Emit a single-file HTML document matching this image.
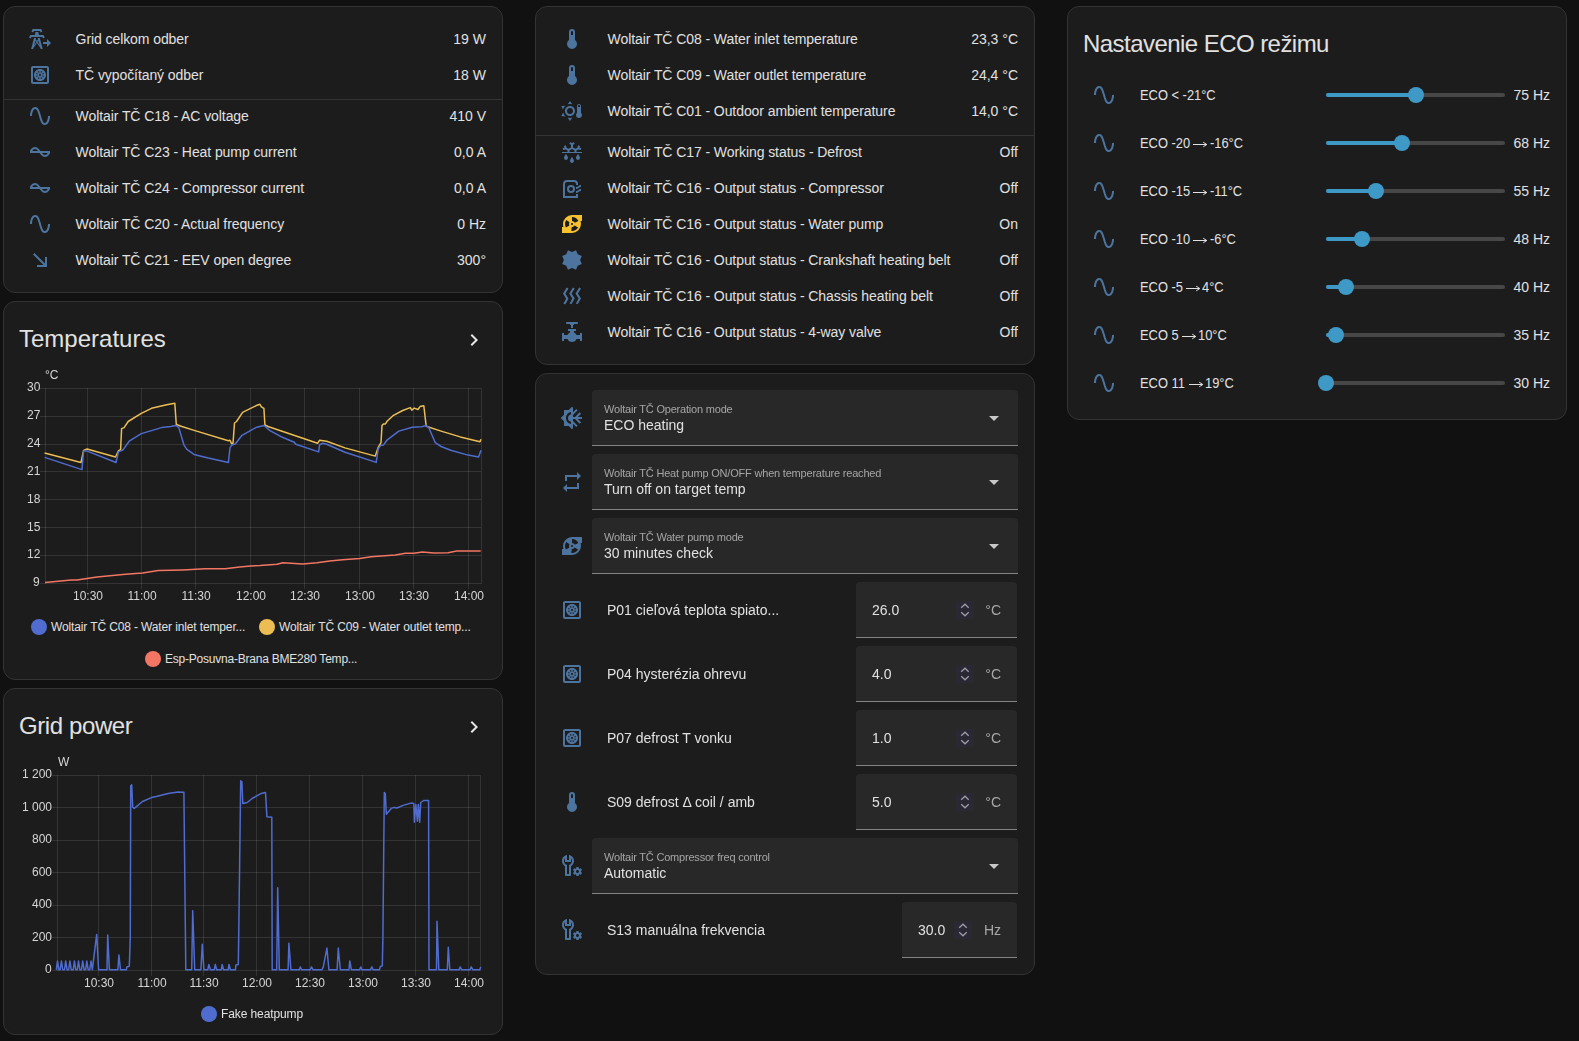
<!DOCTYPE html>
<html><head><meta charset="utf-8"><style>
html,body{margin:0;padding:0;background:#111111;width:1579px;height:1041px;overflow:hidden}
body{position:relative;font-family:"Liberation Sans",sans-serif}
.t{position:absolute;white-space:nowrap}
.i{position:absolute}
.r{position:absolute}
.card{position:absolute;box-sizing:border-box;background:#1c1c1c;border:1px solid #333333;border-radius:12px}
</style></head><body>
<div class="card" style="left:3px;top:6px;width:500px;height:287px"></div>
<svg class="i" style="left:28px;top:27px" width="24" height="24" viewBox="0 0 24 24"><path fill="#4d749e" d="m5.18 5.45-1.78-.9L4.66 2h8.47l1.27 2.55-1.78.89L11.9 4h-6zM15.5 8H11l-.8-3H7.6l-.79 3H2.28L1 10.55l1.79.89L3.5 10h10.78l.72 1.45 1.79-.89zm-.83 14H12.6l-.24-.9-3.46-5.2-3.47 5.2-.23.9H3.13L6 11h2.09l-.36 1.35L8.9 14.1l1.16-1.75L9.71 11h2.07zM8.3 15l-.9-1.35-1.18 4.48zm3.28 3.12-1.18-4.48L9.5 15zM23 16l-4-4v3h-4v2h4v3z"/></svg>
<div class="t" style="left:75.6px;top:31px;font-size:14px;line-height:16px;color:#e1e1e1;letter-spacing:-0.08px">Grid celkom odber</div>
<div class="t" style="right:1093px;top:31px;font-size:14px;line-height:16px;color:#e1e1e1;text-align:right;">19 W</div>
<svg class="i" style="left:28px;top:63px" width="24" height="24" viewBox="0 0 24 24"><path fill="#4d749e" d="M19 3H5c-1.1 0-2 .9-2 2v14c0 1.1.9 2 2 2h14c1.1 0 2-.9 2-2V5c0-1.1-.9-2-2-2m0 16H5V5h14zm-7-1c3.31 0 6-2.69 6-6s-2.69-6-6-6-6 2.69-6 6 2.69 6 6 6m-.75-2.08c-.55-.1-1.05-.32-1.5-.62l1.5-1.5zm1.5 0v-2.11l1.5 1.5c-.45.3-.95.51-1.5.61m2.56-1.67-1.5-1.5h2.11c-.1.55-.31 1.05-.61 1.5m.61-3h-2.11l1.5-1.5c.3.45.51.95.61 1.5m-3.17-3.17c.55.1 1.05.32 1.5.62l-1.5 1.5zM12 11c.55 0 1 .45 1 1s-.45 1-1 1-1-.45-1-1 .45-1 1-1m-.75-2.92v2.11l-1.5-1.5c.45-.3.95-.51 1.5-.61M8.69 9.75l1.5 1.5H8.08c.1-.55.31-1.05.61-1.5m1.5 3-1.5 1.5c-.3-.44-.51-.95-.62-1.5z"/></svg>
<div class="t" style="left:75.6px;top:67px;font-size:14px;line-height:16px;color:#e1e1e1;letter-spacing:-0.08px">TČ vypočítaný odber</div>
<div class="t" style="right:1093px;top:67px;font-size:14px;line-height:16px;color:#e1e1e1;text-align:right;">18 W</div>
<svg class="i" style="left:28px;top:104px" width="24" height="24" viewBox="0 0 24 24"><path fill="#4d749e" d="M16.5 21c-3 0-4.19-4.24-5.45-8.72C10.14 9.04 9 5 7.5 5 4.11 5 4 11.93 4 12H2c0-.37.06-9 5.5-9 3 0 4.21 4.25 5.47 8.74C13.83 14.8 15 19 16.5 19c3.44 0 3.53-6.93 3.53-7h2c0 .37-.06 9-5.53 9"/></svg>
<div class="t" style="left:75.6px;top:108px;font-size:14px;line-height:16px;color:#e1e1e1;letter-spacing:-0.08px">Woltair TČ C18 - AC voltage</div>
<div class="t" style="right:1093px;top:108px;font-size:14px;line-height:16px;color:#e1e1e1;text-align:right;">410 V</div>
<svg class="i" style="left:28px;top:140px" width="24" height="24" viewBox="0 0 24 24"><path fill="#4d749e" d="M12.43 11C12.28 10.84 10 7 7 7s-4.68 3.18-5 4v2h9.57c.15.16 2.43 4 5.43 4s4.68-3.18 5-4v-2zM7 9c1.17 0 2.18.85 3 2H4.31c.47-.83 1.23-2 2.69-2m10 6c-1.17 0-2.18-.85-3-2h5.69c-.47.83-1.23 2-2.69 2"/></svg>
<div class="t" style="left:75.6px;top:144px;font-size:14px;line-height:16px;color:#e1e1e1;letter-spacing:-0.08px">Woltair TČ C23 - Heat pump current</div>
<div class="t" style="right:1093px;top:144px;font-size:14px;line-height:16px;color:#e1e1e1;text-align:right;">0,0 A</div>
<svg class="i" style="left:28px;top:176px" width="24" height="24" viewBox="0 0 24 24"><path fill="#4d749e" d="M12.43 11C12.28 10.84 10 7 7 7s-4.68 3.18-5 4v2h9.57c.15.16 2.43 4 5.43 4s4.68-3.18 5-4v-2zM7 9c1.17 0 2.18.85 3 2H4.31c.47-.83 1.23-2 2.69-2m10 6c-1.17 0-2.18-.85-3-2h5.69c-.47.83-1.23 2-2.69 2"/></svg>
<div class="t" style="left:75.6px;top:180px;font-size:14px;line-height:16px;color:#e1e1e1;letter-spacing:-0.08px">Woltair TČ C24 - Compressor current</div>
<div class="t" style="right:1093px;top:180px;font-size:14px;line-height:16px;color:#e1e1e1;text-align:right;">0,0 A</div>
<svg class="i" style="left:28px;top:212px" width="24" height="24" viewBox="0 0 24 24"><path fill="#4d749e" d="M16.5 21c-3 0-4.19-4.24-5.45-8.72C10.14 9.04 9 5 7.5 5 4.11 5 4 11.93 4 12H2c0-.37.06-9 5.5-9 3 0 4.21 4.25 5.47 8.74C13.83 14.8 15 19 16.5 19c3.44 0 3.53-6.93 3.53-7h2c0 .37-.06 9-5.53 9"/></svg>
<div class="t" style="left:75.6px;top:216px;font-size:14px;line-height:16px;color:#e1e1e1;letter-spacing:-0.08px">Woltair TČ C20 - Actual frequency</div>
<div class="t" style="right:1093px;top:216px;font-size:14px;line-height:16px;color:#e1e1e1;text-align:right;">0 Hz</div>
<svg class="i" style="left:28px;top:248px" width="24" height="24" viewBox="0 0 24 24"><path fill="#4d749e" d="M5 6.41 6.41 5 17 15.59V9h2v10H9v-2h6.59z"/></svg>
<div class="t" style="left:75.6px;top:252px;font-size:14px;line-height:16px;color:#e1e1e1;letter-spacing:-0.08px">Woltair TČ C21 - EEV open degree</div>
<div class="t" style="right:1093px;top:252px;font-size:14px;line-height:16px;color:#e1e1e1;text-align:right;">300°</div>
<div class="r" style="left:4px;top:99px;width:498px;height:1px;background:#333333"></div>
<div class="card" style="left:535px;top:6px;width:500px;height:359px"></div>
<svg class="i" style="left:560px;top:27px" width="24" height="24" viewBox="0 0 24 24"><path fill="#4d749e" d="M15 13V5a3 3 0 0 0-6 0v8a5 5 0 1 0 6 0m-3-9a1 1 0 0 1 1 1v3h-2V5a1 1 0 0 1 1-1"/></svg>
<div class="t" style="left:607.6px;top:31px;font-size:14px;line-height:16px;color:#e1e1e1;letter-spacing:-0.08px">Woltair TČ C08 - Water inlet temperature</div>
<div class="t" style="right:561px;top:31px;font-size:14px;line-height:16px;color:#e1e1e1;text-align:right;">23,3 °C</div>
<svg class="i" style="left:560px;top:63px" width="24" height="24" viewBox="0 0 24 24"><path fill="#4d749e" d="M15 13V5a3 3 0 0 0-6 0v8a5 5 0 1 0 6 0m-3-9a1 1 0 0 1 1 1v3h-2V5a1 1 0 0 1 1-1"/></svg>
<div class="t" style="left:607.6px;top:67px;font-size:14px;line-height:16px;color:#e1e1e1;letter-spacing:-0.08px">Woltair TČ C09 - Water outlet temperature</div>
<div class="t" style="right:561px;top:67px;font-size:14px;line-height:16px;color:#e1e1e1;text-align:right;">24,4 °C</div>
<svg class="i" style="left:560px;top:99px" width="24" height="24" viewBox="0 0 24 24"><path fill="#4d749e" d="M10 2 7.6 5.4C8.4 5.2 9.2 5 10 5s1.6.2 2.4.4zm11 11.8V7c0-1.1-.9-2-2-2s-2 .9-2 2v6.8c-.6.6-1 1.4-1 2.2 0 1.7 1.3 3 3 3s3-1.3 3-3c0-.9-.4-1.7-1-2.2M20 8h-2V7c0-.6.4-1 1-1s1 .4 1 1zM5.5 6.7 1.3 7l1.8 3.8c.1-.8.4-1.6.8-2.3.5-.7 1-1.3 1.6-1.8M10 7c-2.8 0-5 2.2-5 5s2.2 5 5 5 5-2.2 5-5-2.2-5-5-5m0 8c-1.7 0-3-1.3-3-3s1.3-3 3-3 3 1.3 3 3-1.3 3-3 3m-6.8-1.8L1.4 17l4.1.4c-.5-.5-1.1-1.2-1.5-1.9-.5-.7-.7-1.5-.8-2.3m4.4 5.4L10 22l2.4-3.4c-.8.2-1.6.4-2.4.4-.9 0-1.7-.2-2.4-.4"/></svg>
<div class="t" style="left:607.6px;top:103px;font-size:14px;line-height:16px;color:#e1e1e1;letter-spacing:-0.08px">Woltair TČ C01 - Outdoor ambient temperature</div>
<div class="t" style="right:561px;top:103px;font-size:14px;line-height:16px;color:#e1e1e1;text-align:right;">14,0 °C</div>
<svg class="i" style="left:560px;top:140px" width="24" height="24" viewBox="0 0 24 24"><path fill="#4d749e" d="M8 17.85C8 19.04 7.11 20 6 20s-2-.96-2-2.15C4 16.42 6 14 6 14s2 2.42 2 3.85M16.46 12v-1.44l2-1.13 2.33.62.52-1.93-1.77-.47.46-1.77-1.93-.52-.62 2.33-2 1.13L13 7.38V5.12l1.71-1.71L13.29 2 12 3.29 10.71 2 9.29 3.41 11 5.12v2.26L8.5 8.82l-2-1.13-.58-2.33L4 5.88l.47 1.77-1.77.47.52 1.93 2.33-.62 2 1.13V12H2v1h20v-1zM9.5 12v-1.44L12 9.11l2.5 1.45V12zM20 17.85c0 1.19-.89 2.15-2 2.15s-2-.96-2-2.15c0-1.43 2-3.85 2-3.85s2 2.42 2 3.85m-6 3c0 1.19-.89 2.15-2 2.15s-2-.96-2-2.15c0-1.43 2-3.85 2-3.85s2 2.42 2 3.85"/></svg>
<div class="t" style="left:607.6px;top:144px;font-size:14px;line-height:16px;color:#e1e1e1;letter-spacing:-0.08px">Woltair TČ C17 - Working status - Defrost</div>
<div class="t" style="right:561px;top:144px;font-size:14px;line-height:16px;color:#e1e1e1;text-align:right;">Off</div>
<svg class="i" style="left:560px;top:176px" width="24" height="24" viewBox="0 0 24 24"><path fill="#4d749e" d="M11 9a4 4 0 0 1 4 4 4 4 0 0 1-4 4 4 4 0 0 1-4-4 4 4 0 0 1 4-4m0 2a2 2 0 0 0-2 2 2 2 0 0 0 2 2 2 2 0 0 0 2-2 2 2 0 0 0-2-2M7 4h7a4 4 0 0 1 4 4v1h-2V8a2 2 0 0 0-2-2H7a2 2 0 0 0-2 2v12h11v-2h2v4H3V8a4 4 0 0 1 4-4m9 7c2.5 0 2.5-2 5-2v2c-2.5 0-2.5 2-5 2zm0 4c2.5 0 2.5-2 5-2v2c-2.5 0-2.5 2-5 2z"/></svg>
<div class="t" style="left:607.6px;top:180px;font-size:14px;line-height:16px;color:#e1e1e1;letter-spacing:-0.08px">Woltair TČ C16 - Output status - Compressor</div>
<div class="t" style="right:561px;top:180px;font-size:14px;line-height:16px;color:#e1e1e1;text-align:right;">Off</div>
<svg class="i" style="left:560px;top:212px" width="24" height="24" viewBox="0 0 24 24"><path fill="#f6c12f" d="M2 21v-6h1.5a9.3 9.3 0 0 1-.5-3 9 9 0 0 1 9-9h10v6h-1.5c.32.94.5 1.95.5 3a9 9 0 0 1-9 9zm3-9c0 1.28.34 2.47.94 3.5l3.46-2c-.25-.44-.4-.95-.4-1.5 0-.65.21-1.25.56-1.74L6.3 7.93C5.5 9.08 5 10.5 5 12m7 7c2.59 0 4.85-1.41 6.06-3.5l-3.46-2c-.52.9-1.49 1.5-2.6 1.5h-.29l-.38 3.97zm0-10c1.21 0 2.26.72 2.73 1.76l3.64-1.66A6.99 6.99 0 0 0 12 5zm0 2c-.55 0-1 .45-1 1s.45 1 1 1 1-.45 1-1-.45-1-1-1"/></svg>
<div class="t" style="left:607.6px;top:216px;font-size:14px;line-height:16px;color:#e1e1e1;letter-spacing:-0.08px">Woltair TČ C16 - Output status - Water pump</div>
<div class="t" style="right:561px;top:216px;font-size:14px;line-height:16px;color:#e1e1e1;text-align:right;">On</div>
<svg class="i" style="left:560px;top:248px" width="24" height="24" viewBox="0 0 24 24"><path fill="#4d749e" d="M2.2 16.06 3.88 12 2.2 7.94l4.06-1.68L7.94 2.2 12 3.88l4.06-1.68 1.68 4.06 4.06 1.68L20.12 12l1.68 4.06-4.06 1.68-1.68 4.06L12 20.12 7.94 21.8l-1.68-4.06z"/></svg>
<div class="t" style="left:607.6px;top:252px;font-size:14px;line-height:16px;color:#e1e1e1;letter-spacing:-0.08px">Woltair TČ C16 - Output status - Crankshaft heating belt</div>
<div class="t" style="right:561px;top:252px;font-size:14px;line-height:16px;color:#e1e1e1;text-align:right;">Off</div>
<svg class="i" style="left:560px;top:284px" width="24" height="24" viewBox="0 0 24 24"><path fill="#4d749e" d="m8.5 4.5-3.1 5 3.1 5.2-3.3 5.8-1.8-.9 2.7-4.9L3 9.5l3.7-5.9zm6.2-.1-3.1 5.1 3.1 5-3.3 5.8-1.8-.9 2.7-4.9-3.1-5 3.7-6zm6.3 0-3.1 5.1 3.1 5-3.3 5.8-1.8-.9 2.7-4.9-3.1-5 3.7-6z"/></svg>
<div class="t" style="left:607.6px;top:288px;font-size:14px;line-height:16px;color:#e1e1e1;letter-spacing:-0.08px">Woltair TČ C16 - Output status - Chassis heating belt</div>
<div class="t" style="right:561px;top:288px;font-size:14px;line-height:16px;color:#e1e1e1;text-align:right;">Off</div>
<svg class="i" style="left:560px;top:320px" width="24" height="24" viewBox="0 0 24 24"><path fill="#4d749e" d="M22 13v8h-2v-2h-3.42c-.77 1.76-2.53 3-4.58 3s-3.81-1.24-4.58-3H4v2H2v-8h2v2h3.43c.5-1.15 1.42-2.07 2.57-2.58V11H8V9h8v2h-2v1.42c1.15.51 2.07 1.43 2.57 2.58H20v-2zM17 2H7c-.55 0-1 .45-1 1s.45 1 1 1h3v1h1v3h2V5h1V4h3c.55 0 1-.45 1-1s-.45-1-1-1"/></svg>
<div class="t" style="left:607.6px;top:324px;font-size:14px;line-height:16px;color:#e1e1e1;letter-spacing:-0.08px">Woltair TČ C16 - Output status - 4-way valve</div>
<div class="t" style="right:561px;top:324px;font-size:14px;line-height:16px;color:#e1e1e1;text-align:right;">Off</div>
<div class="r" style="left:536px;top:135px;width:498px;height:1px;background:#333333"></div>
<div class="card" style="left:1067px;top:6px;width:500px;height:414px"></div>
<div class="t" style="left:1083px;top:30px;font-size:24px;line-height:27px;color:#e1e1e1;letter-spacing:-0.55px">Nastavenie ECO režimu</div>
<svg class="i" style="left:1092px;top:83px" width="24" height="24" viewBox="0 0 24 24"><path fill="#4d749e" d="M16.5 21c-3 0-4.19-4.24-5.45-8.72C10.14 9.04 9 5 7.5 5 4.11 5 4 11.93 4 12H2c0-.37.06-9 5.5-9 3 0 4.21 4.25 5.47 8.74C13.83 14.8 15 19 16.5 19c3.44 0 3.53-6.93 3.53-7h2c0 .37-.06 9-5.53 9"/></svg>
<div class="t" style="left:1140px;top:87px;font-size:14px;line-height:16px;color:#e1e1e1;transform:scaleX(0.92);transform-origin:0 0">ECO &lt; -21°C</div>
<div class="r" style="left:1326px;top:93px;width:179px;height:4px;border-radius:2px;background:#474747"></div>
<div class="r" style="left:1326px;top:93px;width:90.5px;height:4px;border-radius:2px;background:#3e99c6"></div>
<div class="r" style="left:1407.5px;top:87px;width:16px;height:16px;border-radius:50%;background:#3e99c6"></div>
<div class="t" style="right:29px;top:87px;font-size:14px;line-height:16px;color:#e1e1e1;text-align:right;">75 Hz</div>
<svg class="i" style="left:1092px;top:131px" width="24" height="24" viewBox="0 0 24 24"><path fill="#4d749e" d="M16.5 21c-3 0-4.19-4.24-5.45-8.72C10.14 9.04 9 5 7.5 5 4.11 5 4 11.93 4 12H2c0-.37.06-9 5.5-9 3 0 4.21 4.25 5.47 8.74C13.83 14.8 15 19 16.5 19c3.44 0 3.53-6.93 3.53-7h2c0 .37-.06 9-5.53 9"/></svg>
<div class="t" style="left:1140px;top:135px;font-size:14px;line-height:16px;color:#e1e1e1;transform:scaleX(0.92);transform-origin:0 0">ECO -20</div>
<svg class="i" style="left:1193.10px;top:139px" width="16" height="12" viewBox="0 0 16 12"><path d="M0 5.5H13.6M10.2 3.2 13.8 5.5 10.2 7.8" fill="none" stroke="#e1e1e1" stroke-width="1"/></svg>
<div class="t" style="left:1209.5049609375px;top:135px;font-size:14px;line-height:16px;color:#e1e1e1;transform:scaleX(0.92);transform-origin:0 0">-16°C</div>
<div class="r" style="left:1326px;top:141px;width:179px;height:4px;border-radius:2px;background:#474747"></div>
<div class="r" style="left:1326px;top:141px;width:76.57777777777778px;height:4px;border-radius:2px;background:#3e99c6"></div>
<div class="r" style="left:1393.5777777777778px;top:135px;width:16px;height:16px;border-radius:50%;background:#3e99c6"></div>
<div class="t" style="right:29px;top:135px;font-size:14px;line-height:16px;color:#e1e1e1;text-align:right;">68 Hz</div>
<svg class="i" style="left:1092px;top:179px" width="24" height="24" viewBox="0 0 24 24"><path fill="#4d749e" d="M16.5 21c-3 0-4.19-4.24-5.45-8.72C10.14 9.04 9 5 7.5 5 4.11 5 4 11.93 4 12H2c0-.37.06-9 5.5-9 3 0 4.21 4.25 5.47 8.74C13.83 14.8 15 19 16.5 19c3.44 0 3.53-6.93 3.53-7h2c0 .37-.06 9-5.53 9"/></svg>
<div class="t" style="left:1140px;top:183px;font-size:14px;line-height:16px;color:#e1e1e1;transform:scaleX(0.92);transform-origin:0 0">ECO -15</div>
<svg class="i" style="left:1193.10px;top:187px" width="16" height="12" viewBox="0 0 16 12"><path d="M0 5.5H13.6M10.2 3.2 13.8 5.5 10.2 7.8" fill="none" stroke="#e1e1e1" stroke-width="1"/></svg>
<div class="t" style="left:1209.5049609375px;top:183px;font-size:14px;line-height:16px;color:#e1e1e1;transform:scaleX(0.92);transform-origin:0 0">-11°C</div>
<div class="r" style="left:1326px;top:189px;width:179px;height:4px;border-radius:2px;background:#474747"></div>
<div class="r" style="left:1326px;top:189px;width:50.72222222222217px;height:4px;border-radius:2px;background:#3e99c6"></div>
<div class="r" style="left:1367.7222222222222px;top:183px;width:16px;height:16px;border-radius:50%;background:#3e99c6"></div>
<div class="t" style="right:29px;top:183px;font-size:14px;line-height:16px;color:#e1e1e1;text-align:right;">55 Hz</div>
<svg class="i" style="left:1092px;top:227px" width="24" height="24" viewBox="0 0 24 24"><path fill="#4d749e" d="M16.5 21c-3 0-4.19-4.24-5.45-8.72C10.14 9.04 9 5 7.5 5 4.11 5 4 11.93 4 12H2c0-.37.06-9 5.5-9 3 0 4.21 4.25 5.47 8.74C13.83 14.8 15 19 16.5 19c3.44 0 3.53-6.93 3.53-7h2c0 .37-.06 9-5.53 9"/></svg>
<div class="t" style="left:1140px;top:231px;font-size:14px;line-height:16px;color:#e1e1e1;transform:scaleX(0.92);transform-origin:0 0">ECO -10</div>
<svg class="i" style="left:1193.10px;top:235px" width="16" height="12" viewBox="0 0 16 12"><path d="M0 5.5H13.6M10.2 3.2 13.8 5.5 10.2 7.8" fill="none" stroke="#e1e1e1" stroke-width="1"/></svg>
<div class="t" style="left:1209.5049609375px;top:231px;font-size:14px;line-height:16px;color:#e1e1e1;transform:scaleX(0.92);transform-origin:0 0">-6°C</div>
<div class="r" style="left:1326px;top:237px;width:179px;height:4px;border-radius:2px;background:#474747"></div>
<div class="r" style="left:1326px;top:237px;width:36.799999999999955px;height:4px;border-radius:2px;background:#3e99c6"></div>
<div class="r" style="left:1353.8px;top:231px;width:16px;height:16px;border-radius:50%;background:#3e99c6"></div>
<div class="t" style="right:29px;top:231px;font-size:14px;line-height:16px;color:#e1e1e1;text-align:right;">48 Hz</div>
<svg class="i" style="left:1092px;top:275px" width="24" height="24" viewBox="0 0 24 24"><path fill="#4d749e" d="M16.5 21c-3 0-4.19-4.24-5.45-8.72C10.14 9.04 9 5 7.5 5 4.11 5 4 11.93 4 12H2c0-.37.06-9 5.5-9 3 0 4.21 4.25 5.47 8.74C13.83 14.8 15 19 16.5 19c3.44 0 3.53-6.93 3.53-7h2c0 .37-.06 9-5.53 9"/></svg>
<div class="t" style="left:1140px;top:279px;font-size:14px;line-height:16px;color:#e1e1e1;transform:scaleX(0.92);transform-origin:0 0">ECO -5</div>
<svg class="i" style="left:1185.94px;top:283px" width="16" height="12" viewBox="0 0 16 12"><path d="M0 5.5H13.6M10.2 3.2 13.8 5.5 10.2 7.8" fill="none" stroke="#e1e1e1" stroke-width="1"/></svg>
<div class="t" style="left:1202.3417187500002px;top:279px;font-size:14px;line-height:16px;color:#e1e1e1;transform:scaleX(0.92);transform-origin:0 0">4°C</div>
<div class="r" style="left:1326px;top:285px;width:179px;height:4px;border-radius:2px;background:#474747"></div>
<div class="r" style="left:1326px;top:285px;width:20.888888888888914px;height:4px;border-radius:2px;background:#3e99c6"></div>
<div class="r" style="left:1337.888888888889px;top:279px;width:16px;height:16px;border-radius:50%;background:#3e99c6"></div>
<div class="t" style="right:29px;top:279px;font-size:14px;line-height:16px;color:#e1e1e1;text-align:right;">40 Hz</div>
<svg class="i" style="left:1092px;top:323px" width="24" height="24" viewBox="0 0 24 24"><path fill="#4d749e" d="M16.5 21c-3 0-4.19-4.24-5.45-8.72C10.14 9.04 9 5 7.5 5 4.11 5 4 11.93 4 12H2c0-.37.06-9 5.5-9 3 0 4.21 4.25 5.47 8.74C13.83 14.8 15 19 16.5 19c3.44 0 3.53-6.93 3.53-7h2c0 .37-.06 9-5.53 9"/></svg>
<div class="t" style="left:1140px;top:327px;font-size:14px;line-height:16px;color:#e1e1e1;transform:scaleX(0.92);transform-origin:0 0">ECO 5</div>
<svg class="i" style="left:1181.65px;top:331px" width="16" height="12" viewBox="0 0 16 12"><path d="M0 5.5H13.6M10.2 3.2 13.8 5.5 10.2 7.8" fill="none" stroke="#e1e1e1" stroke-width="1"/></svg>
<div class="t" style="left:1198.052578125px;top:327px;font-size:14px;line-height:16px;color:#e1e1e1;transform:scaleX(0.92);transform-origin:0 0">10°C</div>
<div class="r" style="left:1326px;top:333px;width:179px;height:4px;border-radius:2px;background:#474747"></div>
<div class="r" style="left:1326px;top:333px;width:10.944444444444343px;height:4px;border-radius:2px;background:#3e99c6"></div>
<div class="r" style="left:1327.9444444444443px;top:327px;width:16px;height:16px;border-radius:50%;background:#3e99c6"></div>
<div class="t" style="right:29px;top:327px;font-size:14px;line-height:16px;color:#e1e1e1;text-align:right;">35 Hz</div>
<svg class="i" style="left:1092px;top:371px" width="24" height="24" viewBox="0 0 24 24"><path fill="#4d749e" d="M16.5 21c-3 0-4.19-4.24-5.45-8.72C10.14 9.04 9 5 7.5 5 4.11 5 4 11.93 4 12H2c0-.37.06-9 5.5-9 3 0 4.21 4.25 5.47 8.74C13.83 14.8 15 19 16.5 19c3.44 0 3.53-6.93 3.53-7h2c0 .37-.06 9-5.53 9"/></svg>
<div class="t" style="left:1140px;top:375px;font-size:14px;line-height:16px;color:#e1e1e1;transform:scaleX(0.92);transform-origin:0 0">ECO 11</div>
<svg class="i" style="left:1188.82px;top:379px" width="16" height="12" viewBox="0 0 16 12"><path d="M0 5.5H13.6M10.2 3.2 13.8 5.5 10.2 7.8" fill="none" stroke="#e1e1e1" stroke-width="1"/></svg>
<div class="t" style="left:1205.2158203125px;top:375px;font-size:14px;line-height:16px;color:#e1e1e1;transform:scaleX(0.92);transform-origin:0 0">19°C</div>
<div class="r" style="left:1326px;top:381px;width:179px;height:4px;border-radius:2px;background:#474747"></div>
<div class="r" style="left:1326px;top:381px;width:1.0px;height:4px;border-radius:2px;background:#3e99c6"></div>
<div class="r" style="left:1318.0px;top:375px;width:16px;height:16px;border-radius:50%;background:#3e99c6"></div>
<div class="t" style="right:29px;top:375px;font-size:14px;line-height:16px;color:#e1e1e1;text-align:right;">30 Hz</div>
<div class="card" style="left:3px;top:301px;width:500px;height:379px"></div>
<div class="t" style="left:19px;top:325px;font-size:24px;line-height:27px;color:#e1e1e1;">Temperatures</div>
<svg class="i" style="left:462px;top:328px" width="24" height="24" viewBox="0 0 24 24"><path fill="#e6e6e6" d="M8.59 16.58 13.17 12 8.59 7.41 10 6l6 6-6 6z"/></svg>
<svg class="i" style="left:0;top:0" width="1579" height="1041"><rect x="40" y="388" width="441" height="1" fill="rgba(225,225,225,0.12)"/><rect x="40" y="416" width="441" height="1" fill="rgba(225,225,225,0.12)"/><rect x="40" y="444" width="441" height="1" fill="rgba(225,225,225,0.12)"/><rect x="40" y="471" width="441" height="1" fill="rgba(225,225,225,0.12)"/><rect x="40" y="499" width="441" height="1" fill="rgba(225,225,225,0.12)"/><rect x="40" y="527" width="441" height="1" fill="rgba(225,225,225,0.12)"/><rect x="40" y="555" width="441" height="1" fill="rgba(225,225,225,0.12)"/><rect x="40" y="583" width="441" height="1" fill="rgba(225,225,225,0.12)"/><rect x="45" y="388" width="1" height="196" fill="rgba(225,225,225,0.12)"/><rect x="481" y="388" width="1" height="196" fill="rgba(225,225,225,0.12)"/><rect x="87" y="388" width="1" height="201" fill="rgba(225,225,225,0.12)"/><rect x="141" y="388" width="1" height="201" fill="rgba(225,225,225,0.12)"/><rect x="195" y="388" width="1" height="201" fill="rgba(225,225,225,0.12)"/><rect x="250" y="388" width="1" height="201" fill="rgba(225,225,225,0.12)"/><rect x="304" y="388" width="1" height="201" fill="rgba(225,225,225,0.12)"/><rect x="359" y="388" width="1" height="201" fill="rgba(225,225,225,0.12)"/><rect x="413" y="388" width="1" height="201" fill="rgba(225,225,225,0.12)"/><rect x="468" y="388" width="1" height="201" fill="rgba(225,225,225,0.12)"/><polyline points="45.0,582.5 71.3,579.9 77.0,579.9 97.0,577.0 125.5,574.2 142.6,573.1 158.3,570.6 182.5,569.9 205.3,568.8 225.2,568.8 239.5,567.1 250.9,565.9 260.0,565.6 277.1,564.2 282.8,562.8 302.7,563.9 317.0,562.8 329.8,561.1 342.6,559.7 359.7,558.5 371.1,556.8 388.2,555.4 395.4,555.1 405.3,553.3 413.9,553.3 422.4,552.1 433.8,553.1 448.1,552.8 456.6,551.0 480.7,551.1" fill="none" stroke="#f27663" stroke-width="1.5" stroke-linejoin="round"/><polyline points="44.6,453.1 81.0,462.5 83.6,450.4 87.1,449.0 115.5,457.0 118.5,450.7 120.6,449.8 121.6,428.6 124.1,427.6 128.2,421.5 141.3,413.4 151.5,408.3 166.7,404.8 174.8,403.2 176.3,424.5 181.9,426.5 195.0,430.6 228.4,440.7 230.0,440.2 231.5,443.8 233.0,443.3 234.5,423.0 236.5,421.5 242.6,412.4 255.8,405.8 259.9,404.3 261.4,406.8 263.9,408.3 264.9,425.0 268.0,426.5 317.6,443.3 319.6,440.2 326.7,441.2 345.0,447.9 375.3,456.1 378.2,447.5 381.0,442.7 382.0,425.4 383.4,423.9 385.4,423.9 387.3,421.0 393.0,415.7 402.7,410.5 410.3,407.6 411.8,410.2 414.2,408.1 418.0,409.5 420.0,406.6 423.8,405.7 426.2,426.3 441.1,431.1 460.3,436.9 480.0,441.7 481.0,439.3" fill="none" stroke="#ebbd53" stroke-width="1.5" stroke-linejoin="round"/><polyline points="44.6,457.4 82.0,469.6 83.6,450.9 86.6,450.9 116.0,462.5 118.5,451.9 123.1,449.8 129.2,441.2 141.3,433.6 161.6,427.6 170.7,426.5 175.8,425.5 178.8,427.6 183.9,444.8 186.9,449.3 194.0,454.4 208.2,458.0 228.4,462.5 230.0,447.8 231.5,445.3 235.5,443.8 241.6,435.7 255.8,427.6 263.9,425.5 270.0,430.6 281.1,436.7 294.3,442.2 295.8,444.3 318.6,451.9 319.6,444.8 322.7,443.3 326.7,444.3 345.0,452.3 376.2,462.4 378.2,448.9 380.6,445.5 383.4,445.1 387.3,439.8 398.8,431.1 412.3,427.3 421.9,426.8 425.7,425.4 428.6,427.3 435.3,442.7 441.1,446.5 450.7,450.3 468.0,455.1 478.6,457.1 481.0,450.3" fill="none" stroke="#4f6cce" stroke-width="1.5" stroke-linejoin="round"/></svg>
<div class="t" style="right:1539px;top:380px;font-size:12px;line-height:14px;color:#d6d6d6;text-align:right;will-change:transform">30</div>
<div class="t" style="right:1539px;top:408px;font-size:12px;line-height:14px;color:#d6d6d6;text-align:right;will-change:transform">27</div>
<div class="t" style="right:1539px;top:436px;font-size:12px;line-height:14px;color:#d6d6d6;text-align:right;will-change:transform">24</div>
<div class="t" style="right:1539px;top:464px;font-size:12px;line-height:14px;color:#d6d6d6;text-align:right;will-change:transform">21</div>
<div class="t" style="right:1539px;top:492px;font-size:12px;line-height:14px;color:#d6d6d6;text-align:right;will-change:transform">18</div>
<div class="t" style="right:1539px;top:520px;font-size:12px;line-height:14px;color:#d6d6d6;text-align:right;will-change:transform">15</div>
<div class="t" style="right:1539px;top:547px;font-size:12px;line-height:14px;color:#d6d6d6;text-align:right;will-change:transform">12</div>
<div class="t" style="right:1539px;top:575px;font-size:12px;line-height:14px;color:#d6d6d6;text-align:right;will-change:transform">9</div>
<div class="t" style="left:45px;top:368px;font-size:12px;line-height:14px;color:#d6d6d6;will-change:transform">°C</div>
<div class="t" style="left:-12.400000000000006px;width:200px;top:589px;font-size:12px;line-height:14px;color:#d6d6d6;text-align:center;will-change:transform">10:30</div>
<div class="t" style="left:42.03px;width:200px;top:589px;font-size:12px;line-height:14px;color:#d6d6d6;text-align:center;will-change:transform">11:00</div>
<div class="t" style="left:96.45999999999998px;width:200px;top:589px;font-size:12px;line-height:14px;color:#d6d6d6;text-align:center;will-change:transform">11:30</div>
<div class="t" style="left:150.89px;width:200px;top:589px;font-size:12px;line-height:14px;color:#d6d6d6;text-align:center;will-change:transform">12:00</div>
<div class="t" style="left:205.32px;width:200px;top:589px;font-size:12px;line-height:14px;color:#d6d6d6;text-align:center;will-change:transform">12:30</div>
<div class="t" style="left:259.75px;width:200px;top:589px;font-size:12px;line-height:14px;color:#d6d6d6;text-align:center;will-change:transform">13:00</div>
<div class="t" style="left:314.17999999999995px;width:200px;top:589px;font-size:12px;line-height:14px;color:#d6d6d6;text-align:center;will-change:transform">13:30</div>
<div class="t" style="left:368.61px;width:200px;top:589px;font-size:12px;line-height:14px;color:#d6d6d6;text-align:center;will-change:transform">14:00</div>
<div class="r" style="left:31px;top:619px;width:16px;height:16px;border-radius:50%;background:#4f6cce"></div>
<div class="t" style="left:51px;top:620px;font-size:12px;line-height:14px;color:#e1e1e1;letter-spacing:-0.13px">Woltair TČ C08 - Water inlet temper...</div>
<div class="r" style="left:259px;top:619px;width:16px;height:16px;border-radius:50%;background:#ebbd53"></div>
<div class="t" style="left:279px;top:620px;font-size:12px;line-height:14px;color:#e1e1e1;letter-spacing:-0.13px">Woltair TČ C09 - Water outlet temp...</div>
<div class="r" style="left:145px;top:651px;width:16px;height:16px;border-radius:50%;background:#f27663"></div>
<div class="t" style="left:165px;top:652px;font-size:12px;line-height:14px;color:#e1e1e1;letter-spacing:-0.22px">Esp-Posuvna-Brana BME280 Temp...</div>
<div class="card" style="left:3px;top:688px;width:500px;height:347px"></div>
<div class="t" style="left:19px;top:712px;font-size:24px;line-height:27px;color:#e1e1e1;letter-spacing:-0.4px">Grid power</div>
<svg class="i" style="left:462px;top:715px" width="24" height="24" viewBox="0 0 24 24"><path fill="#e6e6e6" d="M8.59 16.58 13.17 12 8.59 7.41 10 6l6 6-6 6z"/></svg>
<svg class="i" style="left:0;top:0" width="1579" height="1041"><rect x="52" y="775" width="428" height="1" fill="rgba(225,225,225,0.12)"/><rect x="52" y="807" width="428" height="1" fill="rgba(225,225,225,0.12)"/><rect x="52" y="840" width="428" height="1" fill="rgba(225,225,225,0.12)"/><rect x="52" y="872" width="428" height="1" fill="rgba(225,225,225,0.12)"/><rect x="52" y="905" width="428" height="1" fill="rgba(225,225,225,0.12)"/><rect x="52" y="937" width="428" height="1" fill="rgba(225,225,225,0.12)"/><rect x="52" y="970" width="428" height="1" fill="rgba(225,225,225,0.12)"/><rect x="57" y="775" width="1" height="196" fill="rgba(225,225,225,0.12)"/><rect x="480" y="775" width="1" height="196" fill="rgba(225,225,225,0.12)"/><rect x="98" y="775" width="1" height="201" fill="rgba(225,225,225,0.12)"/><rect x="151" y="775" width="1" height="201" fill="rgba(225,225,225,0.12)"/><rect x="203" y="775" width="1" height="201" fill="rgba(225,225,225,0.12)"/><rect x="256" y="775" width="1" height="201" fill="rgba(225,225,225,0.12)"/><rect x="309" y="775" width="1" height="201" fill="rgba(225,225,225,0.12)"/><rect x="362" y="775" width="1" height="201" fill="rgba(225,225,225,0.12)"/><rect x="415" y="775" width="1" height="201" fill="rgba(225,225,225,0.12)"/><rect x="468" y="775" width="1" height="201" fill="rgba(225,225,225,0.12)"/><polyline points="56.3,969.8 56.3,969.8 57.5,961.0 58.9,969.8 60.2,969.8 61.4,961.0 62.8,969.8 64.5,969.8 65.7,961.0 67.1,969.8 68.7,969.8 69.9,961.0 71.3,969.8 73.2,969.8 74.4,961.0 75.8,969.8 77.3,969.8 78.5,961.0 79.9,969.8 81.5,969.8 82.7,961.0 84.1,969.8 85.6,969.8 86.8,961.0 88.2,969.8 89.8,969.8 91.0,961.0 92.4,969.8 92.3,969.8 96.7,934.4 98.6,969.8 107.0,969.8 107.7,935.0 109.4,969.8 117.9,969.8 118.9,955.0 120.5,969.8 126.4,969.8 126.8,966.9 129.3,966.3 130.3,937.3 130.7,785.7 131.7,784.8 132.7,807.4 134.3,808.4 142.5,801.5 151.4,797.6 156.3,796.6 168.1,793.6 178.0,792.0 183.9,792.2 185.8,969.8 191.7,969.8 192.7,910.7 194.7,969.8 200.9,969.8 202.3,944.2 203.9,969.8 207.8,969.8 208.8,964.5 210.4,969.8 214.3,969.8 215.3,964.5 216.7,969.8 221.2,969.8 222.2,964.5 223.5,969.8 228.1,969.8 229.0,964.5 230.4,969.8 235.4,969.8 235.9,964.9 238.3,964.5 238.7,937.3 240.7,780.8 241.9,781.8 242.8,803.5 247.2,802.5 252.1,798.5 260.9,793.6 265.5,792.6 266.9,816.7 271.8,817.2 272.2,969.8 276.7,969.8 277.7,887.7 279.3,969.8 288.1,969.8 288.9,943.2 290.9,969.8 299.3,969.8 300.3,966.9 301.7,969.8 310.2,969.8 311.5,966.9 313.1,969.8 322.0,969.8 323.3,966.9 326.9,948.1 328.9,969.8 337.1,969.8 338.3,948.1 340.3,969.8 348.9,969.8 349.8,961.0 351.4,969.8 359.7,969.8 360.7,966.9 362.0,969.8 370.5,969.8 371.9,966.9 373.1,969.8 379.4,969.8 380.4,966.5 382.3,965.9 382.9,937.3 384.3,792.6 385.3,793.6 386.3,814.3 391.2,808.4 394.1,807.4 397.1,808.0 403.0,805.4 410.9,803.1 413.8,803.5 414.4,822.2 415.8,804.4 417.4,821.2 418.3,804.4 419.7,822.2 420.7,802.5 423.7,800.5 428.6,800.5 429.0,969.8 436.5,969.8 437.0,921.2 438.8,969.8 447.3,969.8 448.3,947.2 449.8,969.8 459.1,969.8 460.1,966.9 461.7,969.8 469.9,969.8 471.3,966.9 472.9,969.8 479.8,969.8 480.7,966.9" fill="none" stroke="#4f6cce" stroke-width="1.5" stroke-linejoin="round"/></svg>
<div class="t" style="right:1527px;top:767px;font-size:12px;line-height:14px;color:#d6d6d6;text-align:right;will-change:transform">1 200</div>
<div class="t" style="right:1527px;top:800px;font-size:12px;line-height:14px;color:#d6d6d6;text-align:right;will-change:transform">1 000</div>
<div class="t" style="right:1527px;top:832px;font-size:12px;line-height:14px;color:#d6d6d6;text-align:right;will-change:transform">800</div>
<div class="t" style="right:1527px;top:865px;font-size:12px;line-height:14px;color:#d6d6d6;text-align:right;will-change:transform">600</div>
<div class="t" style="right:1527px;top:897px;font-size:12px;line-height:14px;color:#d6d6d6;text-align:right;will-change:transform">400</div>
<div class="t" style="right:1527px;top:930px;font-size:12px;line-height:14px;color:#d6d6d6;text-align:right;will-change:transform">200</div>
<div class="t" style="right:1527px;top:962px;font-size:12px;line-height:14px;color:#d6d6d6;text-align:right;will-change:transform">0</div>
<div class="t" style="left:58px;top:755px;font-size:12px;line-height:14px;color:#d6d6d6;will-change:transform">W</div>
<div class="t" style="left:-1.2999999999999972px;width:200px;top:976px;font-size:12px;line-height:14px;color:#d6d6d6;text-align:center;will-change:transform">10:30</div>
<div class="t" style="left:51.53px;width:200px;top:976px;font-size:12px;line-height:14px;color:#d6d6d6;text-align:center;will-change:transform">11:00</div>
<div class="t" style="left:104.36000000000001px;width:200px;top:976px;font-size:12px;line-height:14px;color:#d6d6d6;text-align:center;will-change:transform">11:30</div>
<div class="t" style="left:157.19px;width:200px;top:976px;font-size:12px;line-height:14px;color:#d6d6d6;text-align:center;will-change:transform">12:00</div>
<div class="t" style="left:210.01999999999998px;width:200px;top:976px;font-size:12px;line-height:14px;color:#d6d6d6;text-align:center;will-change:transform">12:30</div>
<div class="t" style="left:262.84999999999997px;width:200px;top:976px;font-size:12px;line-height:14px;color:#d6d6d6;text-align:center;will-change:transform">13:00</div>
<div class="t" style="left:315.68px;width:200px;top:976px;font-size:12px;line-height:14px;color:#d6d6d6;text-align:center;will-change:transform">13:30</div>
<div class="t" style="left:368.51px;width:200px;top:976px;font-size:12px;line-height:14px;color:#d6d6d6;text-align:center;will-change:transform">14:00</div>
<div class="r" style="left:201px;top:1006px;width:16px;height:16px;border-radius:50%;background:#4f6cce"></div>
<div class="t" style="left:221px;top:1007px;font-size:12px;line-height:14px;color:#e1e1e1;letter-spacing:-0.1px">Fake heatpump</div>
<div class="card" style="left:535px;top:373px;width:500px;height:602px"></div>
<svg class="i" style="left:560px;top:406px" width="24" height="24" viewBox="0 0 24 24"><path fill="#4d749e" d="M12 .69 8.69 4H4v4.69L.69 12 4 15.31V20h4.69L12 23.31l1-1v-4.48l3.24 3.24 1.42-1.41L13 15v-2h2l4.66 4.66 1.41-1.42L17.83 13H22v-2h-4.17l3.24-3.24-1.41-1.42L15 11h-2V9l4.66-4.66-1.42-1.41L13 6.17V1.69m-2 4.4v2.04c-1.76.46-3 2.05-3 3.87a4.01 4.01 0 0 0 3 3.87v2.04A6 6 0 0 1 6 12c0-2.93 2.11-5.43 5-5.91"/></svg>
<div class="r" style="left:592px;top:390px;width:426px;height:56px;background:#282828;border-radius:4px 4px 0 0"></div>
<div class="r" style="left:592px;top:445px;width:426px;height:1px;background:#848484"></div>
<div class="t" style="left:604px;top:403px;font-size:11px;line-height:12px;color:#a6a6a6;letter-spacing:-0.2px;will-change:transform">Woltair TČ Operation mode</div>
<div class="t" style="left:604px;top:417px;font-size:14px;line-height:16px;color:#e1e1e1;">ECO heating</div>
<svg class="i" style="left:982px;top:406px" width="24" height="24" viewBox="0 0 24 24"><path fill="#c8c8c8" d="m7 10 5 5 5-5z"/></svg>
<svg class="i" style="left:560px;top:470px" width="24" height="24" viewBox="0 0 24 24"><path fill="#4d749e" d="M17 17H7v-3l-4 4 4 4v-3h12v-6h-2M7 7h10v3l4-4-4-4v3H5v6h2z"/></svg>
<div class="r" style="left:592px;top:454px;width:426px;height:56px;background:#282828;border-radius:4px 4px 0 0"></div>
<div class="r" style="left:592px;top:509px;width:426px;height:1px;background:#848484"></div>
<div class="t" style="left:604px;top:467px;font-size:11px;line-height:12px;color:#a6a6a6;letter-spacing:-0.2px;will-change:transform">Woltair TČ Heat pump ON/OFF when temperature reached</div>
<div class="t" style="left:604px;top:481px;font-size:14px;line-height:16px;color:#e1e1e1;">Turn off on target temp</div>
<svg class="i" style="left:982px;top:470px" width="24" height="24" viewBox="0 0 24 24"><path fill="#c8c8c8" d="m7 10 5 5 5-5z"/></svg>
<svg class="i" style="left:560px;top:534px" width="24" height="24" viewBox="0 0 24 24"><path fill="#4d749e" d="M2 21v-6h1.5a9.3 9.3 0 0 1-.5-3 9 9 0 0 1 9-9h10v6h-1.5c.32.94.5 1.95.5 3a9 9 0 0 1-9 9zm3-9c0 1.28.34 2.47.94 3.5l3.46-2c-.25-.44-.4-.95-.4-1.5 0-.65.21-1.25.56-1.74L6.3 7.93C5.5 9.08 5 10.5 5 12m7 7c2.59 0 4.85-1.41 6.06-3.5l-3.46-2c-.52.9-1.49 1.5-2.6 1.5h-.29l-.38 3.97zm0-10c1.21 0 2.26.72 2.73 1.76l3.64-1.66A6.99 6.99 0 0 0 12 5zm0 2c-.55 0-1 .45-1 1s.45 1 1 1 1-.45 1-1-.45-1-1-1"/></svg>
<div class="r" style="left:592px;top:518px;width:426px;height:56px;background:#282828;border-radius:4px 4px 0 0"></div>
<div class="r" style="left:592px;top:573px;width:426px;height:1px;background:#848484"></div>
<div class="t" style="left:604px;top:531px;font-size:11px;line-height:12px;color:#a6a6a6;letter-spacing:-0.2px;will-change:transform">Woltair TČ Water pump mode</div>
<div class="t" style="left:604px;top:545px;font-size:14px;line-height:16px;color:#e1e1e1;">30 minutes check</div>
<svg class="i" style="left:982px;top:534px" width="24" height="24" viewBox="0 0 24 24"><path fill="#c8c8c8" d="m7 10 5 5 5-5z"/></svg>
<svg class="i" style="left:560px;top:598px" width="24" height="24" viewBox="0 0 24 24"><path fill="#4d749e" d="M19 3H5c-1.1 0-2 .9-2 2v14c0 1.1.9 2 2 2h14c1.1 0 2-.9 2-2V5c0-1.1-.9-2-2-2m0 16H5V5h14zm-7-1c3.31 0 6-2.69 6-6s-2.69-6-6-6-6 2.69-6 6 2.69 6 6 6m-.75-2.08c-.55-.1-1.05-.32-1.5-.62l1.5-1.5zm1.5 0v-2.11l1.5 1.5c-.45.3-.95.51-1.5.61m2.56-1.67-1.5-1.5h2.11c-.1.55-.31 1.05-.61 1.5m.61-3h-2.11l1.5-1.5c.3.45.51.95.61 1.5m-3.17-3.17c.55.1 1.05.32 1.5.62l-1.5 1.5zM12 11c.55 0 1 .45 1 1s-.45 1-1 1-1-.45-1-1 .45-1 1-1m-.75-2.92v2.11l-1.5-1.5c.45-.3.95-.51 1.5-.61M8.69 9.75l1.5 1.5H8.08c.1-.55.31-1.05.61-1.5m1.5 3-1.5 1.5c-.3-.44-.51-.95-.62-1.5z"/></svg>
<div class="t" style="left:607px;top:602px;font-size:14px;line-height:16px;color:#e1e1e1;">P01 cieľová teplota spiato...</div>
<div class="r" style="left:856px;top:582px;width:161px;height:56px;background:#282828;border-radius:4px 4px 0 0"></div>
<div class="r" style="left:856px;top:637px;width:161px;height:1px;background:#848484"></div>
<div class="t" style="left:872px;top:602px;font-size:14px;line-height:16px;color:#e1e1e1;">26.0</div>
<div class="t" style="right:578px;top:602px;font-size:14px;line-height:16px;color:#a8a8a8;text-align:right;">°C</div>
<div class="r" style="left:956px;top:601px;width:18px;height:18px;background:#2a2832"></div>
<svg class="i" style="left:956px;top:601px" width="18" height="18" viewBox="0 0 18 18"><path d="M5.2 6.7 9 3.2l3.7 3.5M5.2 11.3 9 14.7l3.7-3.4" fill="none" stroke="#9b99a8" stroke-width="1.4"/></svg>
<svg class="i" style="left:560px;top:662px" width="24" height="24" viewBox="0 0 24 24"><path fill="#4d749e" d="M19 3H5c-1.1 0-2 .9-2 2v14c0 1.1.9 2 2 2h14c1.1 0 2-.9 2-2V5c0-1.1-.9-2-2-2m0 16H5V5h14zm-7-1c3.31 0 6-2.69 6-6s-2.69-6-6-6-6 2.69-6 6 2.69 6 6 6m-.75-2.08c-.55-.1-1.05-.32-1.5-.62l1.5-1.5zm1.5 0v-2.11l1.5 1.5c-.45.3-.95.51-1.5.61m2.56-1.67-1.5-1.5h2.11c-.1.55-.31 1.05-.61 1.5m.61-3h-2.11l1.5-1.5c.3.45.51.95.61 1.5m-3.17-3.17c.55.1 1.05.32 1.5.62l-1.5 1.5zM12 11c.55 0 1 .45 1 1s-.45 1-1 1-1-.45-1-1 .45-1 1-1m-.75-2.92v2.11l-1.5-1.5c.45-.3.95-.51 1.5-.61M8.69 9.75l1.5 1.5H8.08c.1-.55.31-1.05.61-1.5m1.5 3-1.5 1.5c-.3-.44-.51-.95-.62-1.5z"/></svg>
<div class="t" style="left:607px;top:666px;font-size:14px;line-height:16px;color:#e1e1e1;">P04 hysterézia ohrevu</div>
<div class="r" style="left:856px;top:646px;width:161px;height:56px;background:#282828;border-radius:4px 4px 0 0"></div>
<div class="r" style="left:856px;top:701px;width:161px;height:1px;background:#848484"></div>
<div class="t" style="left:872px;top:666px;font-size:14px;line-height:16px;color:#e1e1e1;">4.0</div>
<div class="t" style="right:578px;top:666px;font-size:14px;line-height:16px;color:#a8a8a8;text-align:right;">°C</div>
<div class="r" style="left:956px;top:665px;width:18px;height:18px;background:#2a2832"></div>
<svg class="i" style="left:956px;top:665px" width="18" height="18" viewBox="0 0 18 18"><path d="M5.2 6.7 9 3.2l3.7 3.5M5.2 11.3 9 14.7l3.7-3.4" fill="none" stroke="#9b99a8" stroke-width="1.4"/></svg>
<svg class="i" style="left:560px;top:726px" width="24" height="24" viewBox="0 0 24 24"><path fill="#4d749e" d="M19 3H5c-1.1 0-2 .9-2 2v14c0 1.1.9 2 2 2h14c1.1 0 2-.9 2-2V5c0-1.1-.9-2-2-2m0 16H5V5h14zm-7-1c3.31 0 6-2.69 6-6s-2.69-6-6-6-6 2.69-6 6 2.69 6 6 6m-.75-2.08c-.55-.1-1.05-.32-1.5-.62l1.5-1.5zm1.5 0v-2.11l1.5 1.5c-.45.3-.95.51-1.5.61m2.56-1.67-1.5-1.5h2.11c-.1.55-.31 1.05-.61 1.5m.61-3h-2.11l1.5-1.5c.3.45.51.95.61 1.5m-3.17-3.17c.55.1 1.05.32 1.5.62l-1.5 1.5zM12 11c.55 0 1 .45 1 1s-.45 1-1 1-1-.45-1-1 .45-1 1-1m-.75-2.92v2.11l-1.5-1.5c.45-.3.95-.51 1.5-.61M8.69 9.75l1.5 1.5H8.08c.1-.55.31-1.05.61-1.5m1.5 3-1.5 1.5c-.3-.44-.51-.95-.62-1.5z"/></svg>
<div class="t" style="left:607px;top:730px;font-size:14px;line-height:16px;color:#e1e1e1;">P07 defrost T vonku</div>
<div class="r" style="left:856px;top:710px;width:161px;height:56px;background:#282828;border-radius:4px 4px 0 0"></div>
<div class="r" style="left:856px;top:765px;width:161px;height:1px;background:#848484"></div>
<div class="t" style="left:872px;top:730px;font-size:14px;line-height:16px;color:#e1e1e1;">1.0</div>
<div class="t" style="right:578px;top:730px;font-size:14px;line-height:16px;color:#a8a8a8;text-align:right;">°C</div>
<div class="r" style="left:956px;top:729px;width:18px;height:18px;background:#2a2832"></div>
<svg class="i" style="left:956px;top:729px" width="18" height="18" viewBox="0 0 18 18"><path d="M5.2 6.7 9 3.2l3.7 3.5M5.2 11.3 9 14.7l3.7-3.4" fill="none" stroke="#9b99a8" stroke-width="1.4"/></svg>
<svg class="i" style="left:560px;top:790px" width="24" height="24" viewBox="0 0 24 24"><path fill="#4d749e" d="M15 13V5a3 3 0 0 0-6 0v8a5 5 0 1 0 6 0m-3-9a1 1 0 0 1 1 1v3h-2V5a1 1 0 0 1 1-1"/></svg>
<div class="t" style="left:607px;top:794px;font-size:14px;line-height:16px;color:#e1e1e1;">S09 defrost Δ coil / amb</div>
<div class="r" style="left:856px;top:774px;width:161px;height:56px;background:#282828;border-radius:4px 4px 0 0"></div>
<div class="r" style="left:856px;top:829px;width:161px;height:1px;background:#848484"></div>
<div class="t" style="left:872px;top:794px;font-size:14px;line-height:16px;color:#e1e1e1;">5.0</div>
<div class="t" style="right:578px;top:794px;font-size:14px;line-height:16px;color:#a8a8a8;text-align:right;">°C</div>
<div class="r" style="left:956px;top:793px;width:18px;height:18px;background:#2a2832"></div>
<svg class="i" style="left:956px;top:793px" width="18" height="18" viewBox="0 0 18 18"><path d="M5.2 6.7 9 3.2l3.7 3.5M5.2 11.3 9 14.7l3.7-3.4" fill="none" stroke="#9b99a8" stroke-width="1.4"/></svg>
<svg class="i" style="left:560px;top:854px" width="24" height="24" viewBox="0 0 24 24"><path fill="#4d749e" d="M9 1.09V6H7V1.09C4.16 1.57 2 4.03 2 7c0 2.22 1.21 4.15 3 5.19V21c0 .55.45 1 1 1h4c.55 0 1-.45 1-1v-8.81c1.79-1.04 3-2.97 3-5.19 0-2.97-2.16-5.43-5-5.91m1 9.37-1 .58V20H7v-8.96l-1-.58C4.77 9.74 4 8.42 4 7c0-1 .37-1.94 1-2.65V8h6V4.35c.63.71 1 1.65 1 2.65 0 1.42-.77 2.74-2 3.46m10.94 7.48a3.3 3.3 0 0 0 0-.89l.97-.73a.22.22 0 0 0 .06-.29l-.92-1.56c-.05-.1-.18-.14-.29-.1l-1.15.45c-.24-.17-.49-.32-.78-.44l-.17-1.19a.235.235 0 0 0-.23-.19h-1.85c-.12 0-.22.08-.24.19l-.17 1.19c-.29.12-.54.27-.78.44l-1.15-.45c-.1-.04-.24 0-.28.1l-.93 1.56c-.06.1-.03.22.06.29l.97.73c-.01.15-.03.3-.03.45s.02.29.03.44l-.97.74a.22.22 0 0 0-.06.29l.93 1.56c.04.1.18.13.28.1l1.15-.46c.24.18.49.33.78.45l.17 1.19c.02.11.12.19.24.19h1.85c.11 0 .21-.08.23-.19l.17-1.19c.29-.12.54-.27.78-.45l1.15.46c.11.03.24 0 .29-.1l.92-1.56a.22.22 0 0 0-.06-.29zM17.5 19c-.83 0-1.5-.67-1.5-1.5s.67-1.5 1.5-1.5 1.5.67 1.5 1.5-.67 1.5-1.5 1.5"/></svg>
<div class="r" style="left:592px;top:838px;width:426px;height:56px;background:#282828;border-radius:4px 4px 0 0"></div>
<div class="r" style="left:592px;top:893px;width:426px;height:1px;background:#848484"></div>
<div class="t" style="left:604px;top:851px;font-size:11px;line-height:12px;color:#a6a6a6;letter-spacing:-0.2px;will-change:transform">Woltair TČ Compressor freq control</div>
<div class="t" style="left:604px;top:865px;font-size:14px;line-height:16px;color:#e1e1e1;">Automatic</div>
<svg class="i" style="left:982px;top:854px" width="24" height="24" viewBox="0 0 24 24"><path fill="#c8c8c8" d="m7 10 5 5 5-5z"/></svg>
<svg class="i" style="left:560px;top:918px" width="24" height="24" viewBox="0 0 24 24"><path fill="#4d749e" d="M9 1.09V6H7V1.09C4.16 1.57 2 4.03 2 7c0 2.22 1.21 4.15 3 5.19V21c0 .55.45 1 1 1h4c.55 0 1-.45 1-1v-8.81c1.79-1.04 3-2.97 3-5.19 0-2.97-2.16-5.43-5-5.91m1 9.37-1 .58V20H7v-8.96l-1-.58C4.77 9.74 4 8.42 4 7c0-1 .37-1.94 1-2.65V8h6V4.35c.63.71 1 1.65 1 2.65 0 1.42-.77 2.74-2 3.46m10.94 7.48a3.3 3.3 0 0 0 0-.89l.97-.73a.22.22 0 0 0 .06-.29l-.92-1.56c-.05-.1-.18-.14-.29-.1l-1.15.45c-.24-.17-.49-.32-.78-.44l-.17-1.19a.235.235 0 0 0-.23-.19h-1.85c-.12 0-.22.08-.24.19l-.17 1.19c-.29.12-.54.27-.78.44l-1.15-.45c-.1-.04-.24 0-.28.1l-.93 1.56c-.06.1-.03.22.06.29l.97.73c-.01.15-.03.3-.03.45s.02.29.03.44l-.97.74a.22.22 0 0 0-.06.29l.93 1.56c.04.1.18.13.28.1l1.15-.46c.24.18.49.33.78.45l.17 1.19c.02.11.12.19.24.19h1.85c.11 0 .21-.08.23-.19l.17-1.19c.29-.12.54-.27.78-.45l1.15.46c.11.03.24 0 .29-.1l.92-1.56a.22.22 0 0 0-.06-.29zM17.5 19c-.83 0-1.5-.67-1.5-1.5s.67-1.5 1.5-1.5 1.5.67 1.5 1.5-.67 1.5-1.5 1.5"/></svg>
<div class="t" style="left:607px;top:922px;font-size:14px;line-height:16px;color:#e1e1e1;">S13 manuálna frekvencia</div>
<div class="r" style="left:902px;top:902px;width:115px;height:56px;background:#282828;border-radius:4px 4px 0 0"></div>
<div class="r" style="left:902px;top:957px;width:115px;height:1px;background:#848484"></div>
<div class="t" style="left:918px;top:922px;font-size:14px;line-height:16px;color:#e1e1e1;">30.0</div>
<div class="t" style="right:578px;top:922px;font-size:14px;line-height:16px;color:#a8a8a8;text-align:right;">Hz</div>
<div class="r" style="left:953.5px;top:921px;width:18px;height:18px;background:#2a2832"></div>
<svg class="i" style="left:953.5px;top:921px" width="18" height="18" viewBox="0 0 18 18"><path d="M5.2 6.7 9 3.2l3.7 3.5M5.2 11.3 9 14.7l3.7-3.4" fill="none" stroke="#9b99a8" stroke-width="1.4"/></svg>
</body></html>
